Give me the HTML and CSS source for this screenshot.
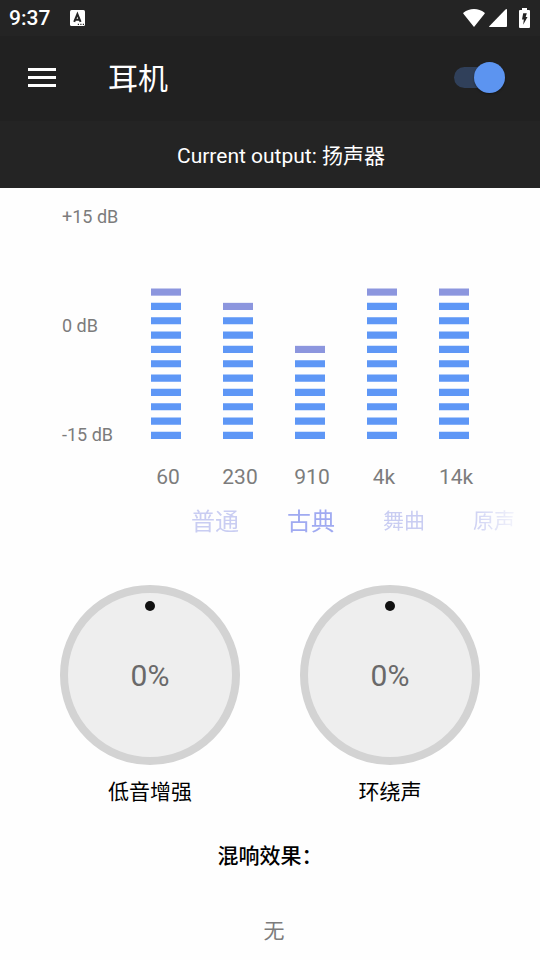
FILE: index.html
```html
<!DOCTYPE html>
<html lang="zh-CN">
<head>
<meta charset="utf-8">
<meta name="viewport" content="width=device-width, initial-scale=1">
<title>耳机</title>
<link rel="stylesheet" href="styles.css">
</head>
<body>
<div class="status">
  <span class="clock">9:37</span>
  <svg class="ime" viewBox="0 0 15 16" aria-hidden="true">
    <rect width="15" height="16" rx="1.5" fill="#fff"/>
    <path d="M4.200 11.800 7.400 4.200 10.600 11.800M5.200 9.700h4.400" fill="none" stroke="#242424" stroke-width="2"/>
    <path d="M7.800 14.300h1.200M10.300 14.300h1.200M12.800 14.300h1.200" stroke="#242424" stroke-width="1.200"/>
  </svg>
  <svg class="wifi" viewBox="0 0 22 18" aria-hidden="true"><path d="M11 18 .2 4.600C.1 4.200.3 3.900.7 3.600 3.500 1.300 7 0 11 0s7.500 1.300 10.300 3.600c.4.300.6.600.5 1Z" fill="#fff"/></svg>
  <svg class="signal" viewBox="0 0 18 18" aria-hidden="true"><path d="M18 1v16q0 1-1 1H1q-1.400 0-.5-1L16.500.6Q18-.6 18 1Z" fill="#fff"/></svg>
  <svg class="battery" viewBox="0 0 11 20" aria-hidden="true">
    <path d="M3 0h5v2h2q1 0 1 1v16q0 1-1 1H1q-1 0-1-1V3q0-1 1-1h2Z" fill="#fff"/>
    <path d="M4.200 5.200h3.600L6.700 9h1.800l-4.300 7.800.6-5.300H3Z" fill="#242424"/>
  </svg>
</div>
<header class="appbar">
  <button class="menu" type="button" aria-label="菜单">
    <svg viewBox="0 0 28 19" aria-hidden="true"><path d="M0 1.500h28M0 9.500h28M0 17.500h28" stroke="#fff" stroke-width="3"/></svg>
  </button>
  <h1 class="title">耳机</h1>
  <input class="switch" type="checkbox" role="switch" aria-label="耳机" checked>
</header>
<p class="output">Current output: 扬声器</p>
<main>
  <section class="equalizer">
    <div class="scale"><span>+15 dB</span><span>0 dB</span><span>-15 dB</span></div>
    <div class="bands">
      <div class="band">
        <svg viewBox="0 0 30 30" preserveAspectRatio="none" aria-hidden="true"><path class="bar" d="M15 30V11"/><path class="cap" d="M15 10V9"/></svg>
        <input type="range" id="b1" min="-15" max="15" value="5">
      </div>
      <div class="band">
        <svg viewBox="0 0 30 30" preserveAspectRatio="none" aria-hidden="true"><path class="bar" d="M15 30V13"/><path class="cap" d="M15 12V11"/></svg>
        <input type="range" id="b2" min="-15" max="15" value="3">
      </div>
      <div class="band">
        <svg viewBox="0 0 30 30" preserveAspectRatio="none" aria-hidden="true"><path class="bar" d="M15 30V19"/><path class="cap" d="M15 18V17"/></svg>
        <input type="range" id="b3" min="-15" max="15" value="-3">
      </div>
      <div class="band">
        <svg viewBox="0 0 30 30" preserveAspectRatio="none" aria-hidden="true"><path class="bar" d="M15 30V11"/><path class="cap" d="M15 10V9"/></svg>
        <input type="range" id="b4" min="-15" max="15" value="5">
      </div>
      <div class="band">
        <svg viewBox="0 0 30 30" preserveAspectRatio="none" aria-hidden="true"><path class="bar" d="M15 30V11"/><path class="cap" d="M15 10V9"/></svg>
        <input type="range" id="b5" min="-15" max="15" value="5">
      </div>
    </div>
  </section>
  <div class="freqs">
    <label for="b1">60</label><label for="b2">230</label><label for="b3">910</label><label for="b4">4k</label><label for="b5">14k</label>
  </div>
  <nav class="presets">
    <button class="preset" type="button">普通</button>
    <button class="preset current" type="button">古典</button>
    <button class="preset small" type="button">舞曲</button>
    <button class="preset small" type="button">原声</button>
  </nav>
  <section class="knobs">
    <div class="knob">
      <div class="dial"><span class="dot"></span><output for="bass">0%</output><input type="range" id="bass" min="0" max="100" value="0"></div>
      <label for="bass">低音增强</label>
    </div>
    <div class="knob">
      <div class="dial"><span class="dot"></span><output for="surround">0%</output><input type="range" id="surround" min="0" max="100" value="0"></div>
      <label for="surround">环绕声</label>
    </div>
  </section>
  <section class="reverb">
    <h2>混响效果：</h2>
    <button class="effect" type="button">无</button>
  </section>
</main>
</body>
</html>
```
FILE: styles.css
```css
* { box-sizing: border-box; }

body {
  margin: 0;
  background: #fefefe;
  color: #000;
  font-family: Roboto, "Noto Sans CJK SC", sans-serif;
  font-size: 21px;
}

button {
  padding: 0;
  border: 0;
  background: none;
  color: inherit;
  font: inherit;
}

svg { display: block; }

h1, h2, p { margin: 0; font-weight: 400; }

.status {
  display: flex;
  align-items: center;
  height: 36px;
  padding: 0 10px 0 9px;
  background: #242424;
  color: #fff;
}

.clock { font-size: 21px; font-weight: 500; }
.ime { width: 15px; height: 16px; margin-left: 20px; }
.wifi { width: 22px; height: 18px; margin-left: auto; }
.signal { width: 18px; height: 18px; margin-left: 4px; }
.battery { width: 11px; height: 20px; margin-left: 12px; }

.appbar {
  display: flex;
  align-items: center;
  height: 85px;
  padding: 0 35px 2px 28px;
  background: #212121;
  color: #fff;
}

.menu svg { width: 28px; height: 19px; }
.title { margin-left: 52px; padding-bottom: 4px; font-size: 30px; }

.switch {
  appearance: none;
  position: relative;
  display: flex;
  justify-content: flex-end;
  width: 51px;
  height: 31px;
  margin: 0 0 0 auto;
}

.switch::before {
  content: "";
  position: absolute;
  inset: 5px 8px 5px 0;
  border-radius: 11px;
  background: #30405a;
}

.switch::after {
  content: "";
  position: relative;
  width: 31px;
  height: 31px;
  border-radius: 50%;
  background: #5c94f0;
  box-shadow: 0 1px 2px #0006;
}

.output {
  height: 67px;
  padding: 1px 0 0 22px;
  background: #242424;
  color: #fff;
  line-height: 68px;
  text-align: center;
}

.equalizer {
  display: flex;
  padding: 17px 50px 0 62px;
}

.scale {
  display: flex;
  flex-direction: column;
  justify-content: space-between;
  width: 68px;
  height: 242px;
  color: #7c7c7c;
  font-size: 18px;
  line-height: 24px;
}

.bands {
  display: flex;
  flex: 1;
  height: 215px;
  margin-top: 19px;
}

.band {
  position: relative;
  display: flex;
  flex: 1;
  justify-content: center;
}

.band svg { width: 30px; height: 100%; }
.bar, .cap { stroke-width: 30; }
.bar { stroke: #5e97f6; stroke-dasharray: 1 1; }
.cap { stroke: #8c96de; }

.band input {
  position: absolute;
  inset: 0;
  width: 100%;
  height: 100%;
  margin: 0;
  opacity: 0;
  writing-mode: vertical-lr;
  direction: rtl;
}

.freqs {
  display: flex;
  padding: 17px 48px 0 132px;
  color: #7c7c7c;
  line-height: 26px;
}

.freqs label { flex: 1; text-align: center; }

.presets {
  display: flex;
  align-items: center;
  gap: 48px;
  height: 36px;
  margin-top: 11px;
  padding-left: 191px;
  overflow: hidden;
  mask-image: linear-gradient(to left, transparent 12px, #000 72px);
}

.preset { flex: none; color: #c9cdf2; font-size: 24px; }
.preset.current { color: #a0aaf1; }
.preset.small { font-size: 21px; }

.knobs {
  display: flex;
  justify-content: space-around;
  padding: 48px 30px 0;
}

.knobs, .knob { text-align: center; }

.dial {
  position: relative;
  display: grid;
  place-items: center;
  width: 180px;
  height: 180px;
  border: 8px solid #d3d3d3;
  border-radius: 50%;
  background: #eee;
  color: #696969;
  font-size: 30px;
}

.dial input {
  position: absolute;
  inset: 0;
  width: 100%;
  height: 100%;
  margin: 0;
  opacity: 0;
}

.dot {
  position: absolute;
  top: 8px;
  width: 10px;
  height: 10px;
  border-radius: 50%;
  background: #111;
}

.knob label { display: block; margin-top: 11px; line-height: 32px; }

.reverb {
  display: flex;
  flex-direction: column;
  align-items: center;
  gap: 43px;
  padding-top: 32px;
  line-height: 32px;
}

.reverb h2 { font-size: 21px; font-weight: 500; }
.effect { margin-left: 8px; color: #7c7c7c; line-height: 32px; }
```
